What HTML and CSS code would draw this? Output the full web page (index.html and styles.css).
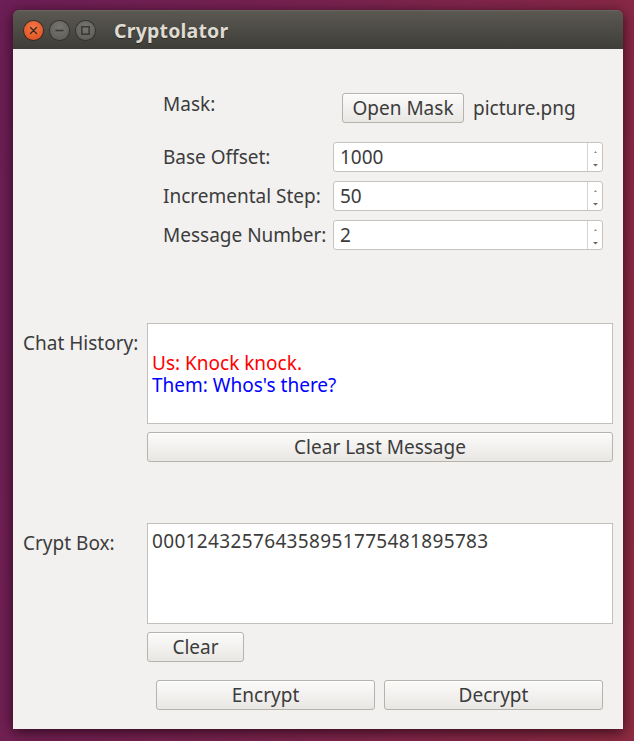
FILE: index.html
```html
<!DOCTYPE html>
<html>
<head>
<meta charset="utf-8">
<link rel="stylesheet" href="styles.css">
</head>
<body>
<div class="desktop">
  <div class="window">
    <div class="titlebar">
      <div class="wbtns">
        <span class="wbtn close"><svg width="19" height="19" viewBox="0 0 19 19"><path d="M6.5 6.5 L12.5 12.5 M12.5 6.5 L6.5 12.5" stroke="#3b2a22" stroke-width="1.4" stroke-linecap="round"/></svg></span>
        <span class="wbtn"><svg width="19" height="19" viewBox="0 0 19 19"><path d="M5.5 9.5 H13.5" stroke="#3a3934" stroke-width="1.6"/></svg></span>
        <span class="wbtn"><svg width="19" height="19" viewBox="0 0 19 19"><rect x="5.8" y="5.8" width="7.4" height="7.4" fill="none" stroke="#3a3934" stroke-width="1.5"/></svg></span>
      </div>
      <div class="title">Cryptolator</div>
    </div>
    <div class="content">
      <div class="form">
        <div class="lbl mask-lbl">Mask:</div>
        <div class="mask-field"><button class="btn open">Open Mask</button><span class="fname">picture.png</span></div>
        <div class="lbl">Base Offset:</div>
        <div class="spin"><span class="val">1000</span><span class="arrows"><svg width="7" height="28" viewBox="0 0 7 28"><path d="M2 10 L3.5 8 L5 10 Z" fill="#8a8884"/><path d="M1 21 L3.5 23.5 L6 21 Z" fill="#6a6864"/></svg></span></div>
        <div class="lbl">Incremental Step:</div>
        <div class="spin"><span class="val">50</span><span class="arrows"><svg width="7" height="28" viewBox="0 0 7 28"><path d="M2 10 L3.5 8 L5 10 Z" fill="#8a8884"/><path d="M1 21 L3.5 23.5 L6 21 Z" fill="#6a6864"/></svg></span></div>
        <div class="lbl">Message Number:</div>
        <div class="spin"><span class="val">2</span><span class="arrows"><svg width="7" height="28" viewBox="0 0 7 28"><path d="M2 10 L3.5 8 L5 10 Z" fill="#8a8884"/><path d="M1 21 L3.5 23.5 L6 21 Z" fill="#6a6864"/></svg></span></div>
      </div>

      <div class="section chat">
        <div class="side">Chat History:</div>
        <div class="main">
          <div class="textbox">
            <div class="line">&nbsp;</div>
            <div class="line us">Us: Knock knock.</div>
            <div class="line them">Them: Whos's there?</div>
          </div>
          <button class="btn wide">Clear Last Message</button>
        </div>
      </div>

      <div class="section crypt">
        <div class="side">Crypt Box:</div>
        <div class="main">
          <div class="textbox">
            <div class="line digits">000124325764358951775481895783</div>
          </div>
          <button class="btn clear">Clear</button>
        </div>
      </div>

      <div class="actions">
        <button class="btn action">Encrypt</button>
        <button class="btn action">Decrypt</button>
      </div>
    </div>
  </div>
</div>
</body>
</html>
```

FILE: styles.css
```css
html, body {
  margin: 0;
  padding: 0;
}
body {
  width: 634px;
  height: 741px;
  overflow: hidden;
  font-family: "Noto Sans", "Open Sans", sans-serif;
}
.desktop {
  width: 634px;
  height: 741px;
  box-sizing: border-box;
  padding: 10px 11px 0 13px;
  background: linear-gradient(100deg, #6c1e56 0%, #7a2350 45%, #8f2b42 100%);
}
.window {
  width: 610px;
  box-shadow: 0 3px 14px rgba(20, 0, 10, 0.75);
  border-radius: 6px 6px 0 0;
}
.titlebar {
  height: 39px;
  border-radius: 6px 6px 0 0;
  background: linear-gradient(#5b5952, #3f3d38);
  display: flex;
  align-items: center;
  box-shadow: inset 0 1px 0 rgba(255,255,255,0.08);
}
.wbtns {
  display: flex;
  gap: 7px;
  margin-left: 11px;
  margin-top: 1px;
}
.wbtn {
  width: 19px;
  height: 19px;
  border-radius: 50%;
  box-sizing: border-box;
  background: radial-gradient(circle at 50% 35%, #77766f, #5a5954);
  box-shadow: 0 0 0 1px #34332f;
  display: block;
}
.wbtn svg { display: block; }
.wbtn.close {
  background: radial-gradient(circle at 50% 35%, #f47845, #dc4a1d);
  box-shadow: 0 0 0 1px #3c2a22;
}
.title {
  margin-left: 19px;
  margin-top: 1px;
  font-weight: bold;
  font-size: 19.5px;
  color: #dfdbd2;
  text-shadow: 0 1px 1px #2a2925;
  letter-spacing: 0.2px;
}
.content {
  background: #f2f1f0;
  height: 680px;
  box-sizing: border-box;
  padding-top: 44px;
  color: #3c3c3c;
  font-size: 19px;
}
.form {
  display: grid;
  grid-template-columns: 170px 270px;
  margin-left: 150px;
  row-gap: 9px;
  align-items: center;
}
.lbl {
  line-height: 22px;
}
.mask-lbl {
  align-self: start;
  margin-top: 0px;
}
.mask-field {
  display: flex;
  align-items: center;
  margin-bottom: 10px;
}
.btn {
  font-family: inherit;
  font-size: 19px;
  color: #3c3c3c;
  height: 30px;
  padding: 0;
  box-sizing: border-box;
  border: 1px solid #b6b2ac;
  border-radius: 3px;
  background: linear-gradient(#fbfbfa, #e9e7e4);
  box-shadow: inset 0 1px 0 #ffffff;
  line-height: 26px;
}
.open {
  margin-left: 9px;
  width: 122px;
}
.fname {
  margin-left: 9px;
}
.spin {
  height: 30px;
  box-sizing: border-box;
  border: 1px solid #c6c3be;
  border-radius: 3px;
  background: #fff;
  display: flex;
  align-items: center;
}
.spin .val {
  flex: 1;
  padding-left: 6px;
}
.spin .arrows {
  width: 14px;
  height: 28px;
  border-left: 1px solid #d6d3ce;
  display: flex;
  justify-content: center;
}
.spin svg { display: block; }
.section {
  display: flex;
  margin-left: 10px;
}
.chat { margin-top: 73px; }
.crypt { margin-top: 61px; }
.side {
  width: 124px;
  line-height: 22px;
  margin-top: 9px;
}
.main {
  width: 466px;
  display: flex;
  flex-direction: column;
  align-items: flex-start;
  gap: 8px;
}
.textbox {
  width: 466px;
  height: 101px;
  box-sizing: border-box;
  border: 1px solid #c3c0bb;
  background: #fff;
  padding: 6px 4px;
}
.line {
  line-height: 22px;
}
.digits {
  letter-spacing: 0.35px;
}
.us { color: #ff0000; }
.them { color: #0000ff; }
.wide { width: 466px; }
.clear { width: 97px; }
.actions {
  display: flex;
  gap: 9px;
  margin-left: 143px;
  margin-top: 18px;
}
.action { width: 219px; }
```
